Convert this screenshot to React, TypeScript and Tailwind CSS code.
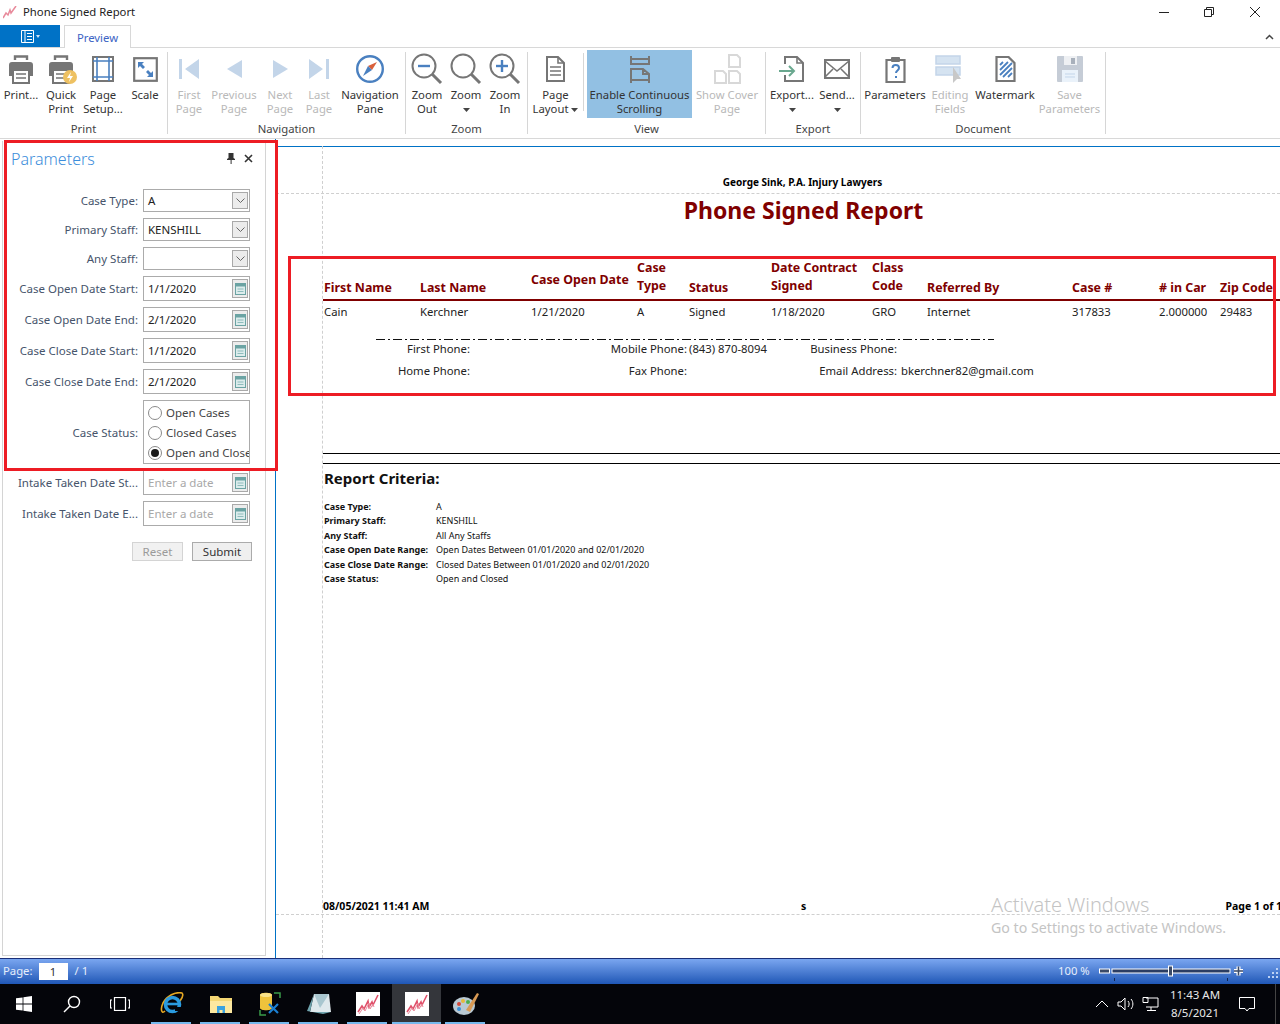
import type { ReactNode } from "react";

const GRAY = "#767676";
const BLUE = "#4a80c0";
const PALE = "#c3d5e9";
const MUTE = "#d8d8d8";

function Arrow() {
  return (
    <svg width="7" height="4" viewBox="0 0 7 4" className="inline-block">
      <path d="M0 0h7L3.5 4z" fill="#444" />
    </svg>
  );
}

function Icon({ w = 32, h = 32, children }: { w?: number; h?: number; children: ReactNode }) {
  return (
    <svg width={w} height={h} viewBox={`0 0 ${w} ${h}`} fill="none">
      {children}
    </svg>
  );
}

function PrinterBody() {
  return (
    <>
      <path d="M10 6V2.5h12V6" stroke={GRAY} strokeWidth="2.4" />
      <path d="M7 8h18a3 3 0 0 1 3 3v11h-4v-6H8v6H4V11a3 3 0 0 1 3-3z" fill={GRAY} />
      <rect x="8" y="16" width="16" height="13" fill="#fff" stroke={GRAY} strokeWidth="2" />
      <path d="M11 20h10M11 24h10" stroke={GRAY} strokeWidth="1.6" />
    </>
  );
}

function Magnifier({ sign }: { sign?: "minus" | "plus" }) {
  return (
    <>
      <circle cx="13" cy="13" r="11.5" stroke={GRAY} strokeWidth="2" />
      <path d="M21 21l9 9" stroke={GRAY} strokeWidth="3" />
      {sign && <path d="M7 13h12" stroke={BLUE} strokeWidth="2.4" />}
      {sign === "plus" && <path d="M13 7v12" stroke={BLUE} strokeWidth="2.4" />}
    </>
  );
}

function ReportLogo({ size = 24 }: { size?: number }) {
  return (
    <svg width={size} height={size} viewBox="0 0 24 24" fill="none">
      <rect width="24" height="24" fill="#fff" />
      <path d="M2 20l4-6 2 3 4-8 1 6 3-5 1 3 5-10" stroke="#e0506a" strokeWidth="1.6" />
      <path d="M3 22l4-6 2 3 4-8 1 6 3-5 1 3" stroke="#e98a9b" strokeWidth="1" />
    </svg>
  );
}

function RibbonBtn({
  width,
  icon,
  lines,
  disabled,
  active,
}: {
  width: string;
  icon: ReactNode;
  lines: ReactNode[];
  disabled?: boolean;
  active?: boolean;
}) {
  return (
    <div className={`${width} h-[68px] shrink-0 flex flex-col items-center ${active ? "bg-[#92c0e3]" : ""} ${disabled ? "text-[#b9b9b9]" : "text-[#333]"}`}>
      <div className="h-[38px] flex items-center justify-center">{icon}</div>
      {lines.map((l, i) => (
        <div key={i} className="h-[14px] leading-[14px] whitespace-nowrap">
          {l}
        </div>
      ))}
    </div>
  );
}

function Group({ label, children, width }: { label: string; children: ReactNode; width: string }) {
  return (
    <div className={`${width} shrink-0 flex flex-col`}>
      <div className="flex h-[68px]">{children}</div>
      <div className="h-[20px] leading-[22px] text-center text-[#444]">{label}</div>
    </div>
  );
}

function Sep() {
  return <div className="w-px h-[82px] mt-[2px] bg-[#d6d6d6] shrink-0" />;
}

function Ribbon() {
  return (
    <div className="h-[91px] shrink-0 flex pt-[2px] border-b border-[#d8d8d8] text-[11.3px]">
      <Group label="Print" width="w-[167px]">
        <div className="w-[2px]" />
        <RibbonBtn width="w-[38px]" lines={["Print..."]} icon={<Icon><g transform="translate(0 1)"><PrinterBody /></g></Icon>} />
        <RibbonBtn
          width="w-[42px]"
          lines={["Quick", "Print"]}
          icon={
            <Icon>
              <g transform="translate(0 1)"><PrinterBody /></g>
              <circle cx="25" cy="24" r="7" fill="#eec162" />
              <path d="M26 19l-4 6h3l-1 4 4-6h-3z" fill="#fff" />
            </Icon>
          }
        />
        <RibbonBtn
          width="w-[42px]"
          lines={["Page", "Setup..."]}
          icon={
            <Icon w={24} h={26}>
              <rect x="2" y="1" width="20" height="24" stroke={GRAY} strokeWidth="2" />
              <path d="M6 1v24M18 1v24M2 5h20M2 21h20" stroke={BLUE} strokeWidth="1.6" />
            </Icon>
          }
        />
        <RibbonBtn
          width="w-[42px]"
          lines={["Scale"]}
          icon={
            <Icon w={25} h={25}>
              <rect x="1.2" y="1.2" width="22.6" height="22.6" stroke={GRAY} strokeWidth="2.2" />
              <path d="M5 5h6l-2 2 3 3-2 2-3-3-2 2zM20 20h-6l2-2-3-3 2-2 3 3 2-2z" fill={BLUE} />
            </Icon>
          }
        />
      </Group>
      <Sep />
      <Group label="Navigation" width="w-[237px]">
        <RibbonBtn width="w-[42px]" disabled lines={["First", "Page"]} icon={<Icon w={20} h={20}><path d="M0 0h3v20H0zM20 0v20L6 10z" fill={PALE} /></Icon>} />
        <RibbonBtn width="w-[48px]" disabled lines={["Previous", "Page"]} icon={<Icon w={15} h={20}><path d="M15 1v18L0 10z" fill={PALE} /></Icon>} />
        <RibbonBtn width="w-[44px]" disabled lines={["Next", "Page"]} icon={<Icon w={15} h={20}><path d="M0 1v18l15-9z" fill={PALE} /></Icon>} />
        <RibbonBtn width="w-[34px]" disabled lines={["Last", "Page"]} icon={<Icon w={20} h={20}><path d="M17 0h3v20h-3zM0 0v20l14-10z" fill={PALE} /></Icon>} />
        <RibbonBtn
          width="w-[68px]"
          lines={["Navigation", "Pane"]}
          icon={
            <Icon w={30} h={30}>
              <circle cx="15" cy="15" r="12.8" stroke={BLUE} strokeWidth="2.4" />
              <path d="M22 8l-9 4 4 4z" fill="#d9603b" />
              <path d="M8 22l5-10 4 4z" fill={BLUE} />
            </Icon>
          }
        />
      </Group>
      <Sep />
      <Group label="Zoom" width="w-[121px]">
        <div className="w-[2px]" />
        <RibbonBtn width="w-[38px]" lines={["Zoom", "Out"]} icon={<Icon><Magnifier sign="minus" /></Icon>} />
        <RibbonBtn width="w-[40px]" lines={["Zoom", <Arrow key="a" />]} icon={<Icon><Magnifier /></Icon>} />
        <RibbonBtn width="w-[38px]" lines={["Zoom", "In"]} icon={<Icon><Magnifier sign="plus" /></Icon>} />
      </Group>
      <Sep />
      <Group label="View" width="w-[237px]">
        <RibbonBtn
          width="w-[55px]"
          lines={["Page", <span key="l">Layout <Arrow /></span>]}
          icon={
            <Icon w={21} h={26}>
              <path d="M2 1h11l6 6v18H2z" stroke={GRAY} strokeWidth="2" />
              <path d="M13 1v6h6M5 11h11M5 15h11M5 19h11" stroke={GRAY} strokeWidth="1.6" />
            </Icon>
          }
        />
        <div className="w-px h-[58px] mt-[3px] bg-[#d6d6d6]" />
        <div className="w-[3px]" />
        <RibbonBtn
          width="w-[105px]"
          active
          lines={["Enable Continuous", "Scrolling"]}
          icon={
            <Icon w={22} h={27}>
              <path d="M2 0v8h18V0M2 3h18" stroke={GRAY} strokeWidth="2" />
              <path d="M2 27V13h12l6 5v9M2 24h18M14 13v5h6" stroke={GRAY} strokeWidth="2" />
            </Icon>
          }
        />
        <RibbonBtn
          width="w-[70px]"
          disabled
          lines={["Show Cover", "Page"]}
          icon={
            <Icon w={27} h={30}>
              <path d="M15 1h8l3 3v9H15zM3 17h6l3 3v9H1V17zM16 17h7l3 3v9H15V17z" stroke={MUTE} strokeWidth="2" />
            </Icon>
          }
        />
      </Group>
      <Sep />
      <Group label="Export" width="w-[94px]">
        <div className="w-[2px]" />
        <RibbonBtn
          width="w-[48px]"
          lines={["Export...", <Arrow key="a" />]}
          icon={
            <Icon w={26} h={26}>
              <path d="M6 8V1h12l6 6v18H6v-6" stroke={GRAY} strokeWidth="2" />
              <path d="M18 1v6h6" stroke={GRAY} strokeWidth="1.6" />
              <path d="M0 15h14M10 10l5 5-5 5" stroke="#6aa88f" strokeWidth="2" />
            </Icon>
          }
        />
        <RibbonBtn
          width="w-[42px]"
          lines={["Send...", <Arrow key="a" />]}
          icon={
            <Icon w={26} h={20}>
              <rect x="1" y="1" width="24" height="18" stroke={GRAY} strokeWidth="2" />
              <path d="M1 2l12 10L25 2M1 18l8-8M25 18l-8-8" stroke={GRAY} strokeWidth="1.6" />
            </Icon>
          }
        />
      </Group>
      <Sep />
      <Group label="Document" width="w-[244px]">
        <div className="w-[5px]" />
        <RibbonBtn
          width="w-[58px]"
          lines={["Parameters"]}
          icon={
            <Icon w={21} h={27}>
              <path d="M6 4H1.5v22h18V4H15" stroke={GRAY} strokeWidth="2.2" />
              <rect x="6" y="1" width="9" height="5" rx="1" fill={GRAY} />
              <path d="M7.5 12c0-4 6.5-4 6.5 0 0 2.5-3 2.5-3 5" stroke={BLUE} strokeWidth="2" />
              <path d="M10 20h2v2h-2z" fill={BLUE} />
            </Icon>
          }
        />
        <RibbonBtn
          width="w-[52px]"
          disabled
          lines={["Editing", "Fields"]}
          icon={
            <Icon w={30} h={30}>
              <path d="M1 2h24v8H1zM1 13h24v8H1z" fill="#d5e3f1" stroke={PALE} strokeWidth="1.5" />
              <path d="M18 13v16l4-4 4 0z" fill="#c8c8c8" />
            </Icon>
          }
        />
        <RibbonBtn
          width="w-[58px]"
          lines={["Watermark"]}
          icon={
            <Icon w={21} h={26}>
              <path d="M1.5 1h12l6 6v18h-18z" stroke={GRAY} strokeWidth="2.2" />
              <path d="M5 9l3-3M5 14l8-8M5 19l12-12M8 21l9-9M13 21l4-4" stroke={BLUE} strokeWidth="1.8" />
            </Icon>
          }
        />
        <RibbonBtn
          width="w-[71px]"
          disabled
          lines={["Save", "Parameters"]}
          icon={
            <Icon w={26} h={26}>
              <rect width="26" height="26" rx="1" fill="#c5ccd6" />
              <rect x="7" y="0" width="13" height="9" fill="#eef0f3" />
              <rect x="14" y="2" width="4" height="6" fill="#a8b0bb" />
              <rect x="5" y="14" width="16" height="12" fill="#eaf2fa" />
              <path d="M8 18h10M8 21h10" stroke={PALE} />
            </Icon>
          }
        />
      </Group>
      <Sep />
    </div>
  );
}

function Caret() {
  return (
    <div className="w-[16px] h-[17px] bg-[#ececec] border border-[#a9a9a9] flex items-center justify-center mr-[1px]">
      <svg width="9" height="6" viewBox="0 0 9 6" fill="none">
        <path d="M.5.5l4 4 4-4" stroke="#666" />
      </svg>
    </div>
  );
}

function Calendar() {
  return (
    <div className="w-[16px] h-[19px] bg-[#ececec] border border-[#a9a9a9] flex items-center justify-center mr-[1px]">
      <svg width="11" height="13" viewBox="0 0 11 13" fill="none">
        <rect x=".5" y="1.5" width="10" height="11" stroke="#6ba3a3" fill="#dcecec" />
        <rect x=".5" y="1.5" width="10" height="3" fill="#6ba3a3" />
        <path d="M2.5 7h6M2.5 9.5h6" stroke="#8fbcbc" />
      </svg>
    </div>
  );
}

function Row({ label, children }: { label: string; children: ReactNode }) {
  return (
    <div className="flex items-center">
      <div className="w-[135px] pt-[1px] text-right text-[#46546b] whitespace-nowrap">{label}</div>
      <div className="ml-[5px]">{children}</div>
    </div>
  );
}

function Combo({ value }: { value: string }) {
  return (
    <div className="w-[107px] h-[23px] border border-[#ababab] bg-white flex items-center justify-between pl-[4px] text-[#222]">
      <span>{value}</span>
      <Caret />
    </div>
  );
}

function DateField({ value }: { value?: string }) {
  return (
    <div className="w-[107px] h-[25px] border border-[#ababab] bg-white flex items-center justify-between pl-[4px]">
      <span className={value ? "text-[#222]" : "text-[#a8a8a8]"}>{value ?? "Enter a date"}</span>
      <Calendar />
    </div>
  );
}

function Radio({ label, checked }: { label: string; checked?: boolean }) {
  return (
    <div className="flex items-center gap-[4px] h-[20px] whitespace-nowrap text-[#444]">
      <div className="w-[14px] h-[14px] shrink-0 rounded-full border border-[#8a8a8a] bg-white flex items-center justify-center">
        {checked && <div className="w-[8px] h-[8px] rounded-full bg-[#1a1a1a]" />}
      </div>
      <span>{label}</span>
    </div>
  );
}

function ParametersPanel() {
  return (
    <aside className="w-[275px] shrink-0 pl-[2px] pb-[2px] pt-[2px]">
      <div className="w-[264px] h-full border-x border-b border-[#d4d4d4] text-[11.5px] flex flex-col">
        <div className="h-[34px] flex items-center pl-[8px] pr-[12px] justify-between">
          <span className="text-[16px] pt-[1px] text-[#3d8edb] font-light">Parameters</span>
          <div className="flex items-center gap-[9px]">
            <svg width="8" height="11" viewBox="0 0 8 11" fill="#333">
              <path d="M1.5 0h5v5l1.500 1v1H4.600v4h-1V7H0V6l1.500-1z" />
            </svg>
            <svg width="9" height="9" viewBox="0 0 9 9" fill="none">
              <path d="M1 1l7 7M8 1L1 8" stroke="#333" strokeWidth="1.6" />
            </svg>
          </div>
        </div>
        <div className="mt-[14px] flex flex-col gap-[6px]">
          <Row label="Case Type:"><Combo value="A" /></Row>
          <Row label="Primary Staff:"><Combo value="KENSHILL" /></Row>
          <Row label="Any Staff:"><Combo value="" /></Row>
          <Row label="Case Open Date Start:"><DateField value="1/1/2020" /></Row>
          <Row label="Case Open Date End:"><DateField value="2/1/2020" /></Row>
          <Row label="Case Close Date Start:"><DateField value="1/1/2020" /></Row>
          <Row label="Case Close Date End:"><DateField value="2/1/2020" /></Row>
          <Row label="Case Status:">
            <div className="w-[107px] h-[64px] border border-[#ababab] pl-[4px] pt-[2px] overflow-hidden">
              <Radio label="Open Cases" />
              <Radio label="Closed Cases" />
              <Radio label="Open and Closed" checked />
            </div>
          </Row>
          <Row label="Intake Taken Date St..."><DateField /></Row>
          <Row label="Intake Taken Date E..."><DateField /></Row>
        </div>
        <div className="mt-[16px] ml-[129px] flex gap-[9px]">
          <div className="w-[51px] h-[19px] leading-[17px] text-center border border-[#d4d4d4] bg-[#f1f1f1] text-[#9a9a9a]">Reset</div>
          <div className="w-[60px] h-[19px] leading-[17px] text-center border border-[#ababab] bg-[#efefef] text-[#333]">Submit</div>
        </div>
      </div>
    </aside>
  );
}

const COLS = "grid grid-cols-[96px_111px_106px_52px_82px_101px_55px_145px_87px_61px_60px]";

function ContactRow({ a, b, bv, c, cv }: { a: string; b: string; bv?: string; c: string; cv?: string }) {
  return (
    <div className="flex h-[22px] items-center whitespace-nowrap text-[#222]">
      <div className="w-[147px] text-right">{a}</div>
      <div className="w-[217px] text-right">{b}</div>
      <div className="w-[2px]" />
      <div className="w-[81px]">{bv}</div>
      <div className="w-[127px] text-right">{c}</div>
      <div className="ml-[4px]">{cv}</div>
    </div>
  );
}

function Criteria({ label, value }: { label: string; value: string }) {
  return (
    <div className="flex h-[14.4px] leading-[14.4px] items-center text-[9px] whitespace-nowrap text-[#111]">
      <div className="w-[112px] font-bold">{label}</div>
      <div>{value}</div>
    </div>
  );
}

function Report() {
  return (
    <main className="relative flex-1 min-w-0 border-l border-[#0072c6] overflow-hidden pt-[7px]">
      <div className="absolute left-[46px] top-[7px] bottom-0 border-l border-dashed border-[#cfcfcf]" />
      <div className="absolute left-0 right-0 top-[54px] border-t border-dashed border-[#cfcfcf]" />
      <div className="absolute left-0 right-0 top-[775px] border-t border-dashed border-[#cfcfcf]" />

      <div className="border-t border-[#0072c6]" />
      <div className="relative w-[957px] ml-[47px] text-[11.3px]">
        <div className="mt-[28px] h-[14px] pl-[2px] leading-[14px] text-center text-[10px] font-bold text-black">George Sink, P.A. Injury Lawyers</div>
        <div className="mt-[5px] h-[32px] pl-[4px] leading-[32px] text-center text-[23px] font-bold text-[#800000]">Phone Signed Report</div>

        <div className={`mt-[33px] h-[40px] ${COLS} items-end pl-[1px] text-[12.4px] font-bold text-[#800000] leading-[18px]`}>
          <div className="pb-[3px]">First Name</div>
          <div className="pb-[3px]">Last Name</div>
          <div className="self-center whitespace-nowrap">Case Open Date</div>
          <div className="pb-[5px]">Case<br />Type</div>
          <div className="pb-[3px]">Status</div>
          <div className="pb-[5px] whitespace-nowrap">Date Contract<br />Signed</div>
          <div className="pb-[5px]">Class<br />Code</div>
          <div className="pb-[3px]">Referred By</div>
          <div className="pb-[3px]">Case #</div>
          <div className="pb-[3px] whitespace-nowrap"># in Car</div>
          <div className="pb-[3px] whitespace-nowrap">Zip Code</div>
        </div>
        <div className="h-[2px] bg-[#800000]" />
        <div className={`h-[22px] ${COLS} items-center pl-[1px] text-[#222]`}>
          <div>Cain</div>
          <div>Kerchner</div>
          <div>1/21/2020</div>
          <div>A</div>
          <div>Signed</div>
          <div>1/18/2020</div>
          <div>GRO</div>
          <div>Internet</div>
          <div>317833</div>
          <div>2.000000</div>
          <div>29483</div>
        </div>
        <div className="mt-[16px] ml-[53px] h-[1px] w-[618px]">
          <svg width="618" height="1" className="block">
            <line x1="0" y1="0.5" x2="618" y2="0.5" stroke="#111" strokeDasharray="9 3 2 3" />
          </svg>
        </div>
        <div className="mt-[-2px]">
          <ContactRow a="First Phone:" b="Mobile Phone:" bv="(843) 870-8094" c="Business Phone:" />
          <ContactRow a="Home Phone:" b="Fax Phone:" c="Email Address:" cv="bkerchner82@gmail.com" />
        </div>

        <div className="mt-[71px] h-px bg-black" />
        <div className="mt-[9px] h-px bg-black" />
        <div className="mt-[4px] ml-[1px] h-[20px] leading-[20px] text-[15px] font-bold text-[#111]">Report Criteria:</div>
        <div className="mt-[12px] ml-[1px]">
          <Criteria label="Case Type:" value="A" />
          <Criteria label="Primary Staff:" value="KENSHILL" />
          <Criteria label="Any Staff:" value="All Any Staffs" />
          <Criteria label="Case Open Date Range:" value="Open Dates Between 01/01/2020 and 02/01/2020" />
          <Criteria label="Case Close Date Range:" value="Closed Dates Between 01/01/2020 and 02/01/2020" />
          <Criteria label="Case Status:" value="Open and Closed" />
        </div>
        <div className="mt-[313px] flex items-center text-[10.5px] font-bold text-black whitespace-nowrap">
          <span className="w-[478px] shrink-0">08/05/2021 11:41 AM</span>
          <span>s</span>
          <span className="ml-auto mr-[-2px]">Page 1 of 1</span>
        </div>
      </div>
      <div className="absolute left-[715px] top-[753px] text-[#c4c4c4] pointer-events-none">
        <div className="text-[20px] leading-[26px] font-light">Activate Windows</div>
        <div className="text-[14.2px] leading-[20px]">Go to Settings to activate Windows.</div>
      </div>
    </main>
  );
}

function StatusBar() {
  return (
    <div className="h-[26px] shrink-0 border-t border-[#1a2f78] bg-gradient-to-b from-[#7aa6f0] to-[#1f57b6] flex items-center text-[11.3px] text-[#e6eefb] pl-[3px] whitespace-nowrap">
      <span>Page:</span>
      <div className="ml-[6px] w-[29px] h-[17px] bg-white text-center leading-[17px] text-[#333]">1</div>
      <span className="ml-[7px]">/ 1</span>
      <span className="ml-auto w-[41px]">100 %</span>
      <svg width="181" height="20" viewBox="0 0 181 20" className="mt-[2px] shrink-0" fill="none">
        <rect x="0.5" y="6" width="10" height="4" fill="#3a4a68" stroke="#fff" />
        <rect x="13" y="6" width="118" height="4" fill="#2b3d63" stroke="#fff" />
        <rect x="69.5" y="3" width="4" height="10" fill="#3a4a68" stroke="#fff" />
        <path d="M15.5 15v3M128.5 15v3" stroke="#14264f" />
        <path d="M135 8h9M139.5 3.5v9" stroke="#fff" strokeWidth="4" />
        <path d="M135 8h9M139.5 3.5v9" stroke="#3a4a68" strokeWidth="1.6" />
        <path d="M177 5h2v2h-2zM173 9h2v2h-2zM177 9h2v2h-2zM169 13h2v2h-2zM173 13h2v2h-2zM177 13h2v2h-2z" fill="#bcd2f5" />
      </svg>
    </div>
  );
}

function SysIcon({ children }: { children: ReactNode }) {
  return <div className="w-[48px] h-[40px] shrink-0 flex items-center justify-center">{children}</div>;
}

function TaskIcon({ children, active }: { children: ReactNode; active?: boolean }) {
  return (
    <div className={`relative w-[49px] h-[40px] shrink-0 flex items-center justify-center ${active ? "bg-[#34363b]" : ""}`}>
      {children}
      <div className={`absolute bottom-0 h-[2px] bg-[#76b9ed] ${active ? "left-0 right-0" : "left-[4px] right-[5px]"}`} />
    </div>
  );
}

function Taskbar() {
  return (
    <div className="h-[40px] shrink-0 bg-[#04050a] flex items-center text-white">
      <SysIcon>
        <svg width="16" height="16" viewBox="0 0 16 16" fill="#fff">
          <path d="M0 2.3L6.6 1.4v6.2H0zM7.4 1.3L16 0v7.6H7.4zM0 8.4h6.6v6.2L0 13.7zM7.4 8.4H16V16l-8.6-1.3z" />
        </svg>
      </SysIcon>
      <SysIcon>
        <svg width="18" height="18" viewBox="0 0 18 18" fill="none" stroke="#fff" strokeWidth="1.4">
          <circle cx="11" cy="7" r="5.5" />
          <path d="M7 11l-6 6" />
        </svg>
      </SysIcon>
      <SysIcon>
        <svg width="20" height="14" viewBox="0 0 20 14" fill="none" stroke="#fff" strokeWidth="1.2">
          <rect x="4.5" y=".5" width="11" height="13" />
          <path d="M2 3H.5v8H2M18 3h1.5v8H18" />
        </svg>
      </SysIcon>
      <div className="w-[3px]" />
      <TaskIcon>
        <svg width="24" height="24" viewBox="0 0 24 24" fill="none">
          <path d="M5 19C1 23 .5 16 3 11 7 4 15-.5 22 1c2 2-.5 6-2 8" stroke="#e5a823" strokeWidth="1.6" />
          <circle cx="12.5" cy="12.5" r="7" stroke="#2a9be0" strokeWidth="3.6" />
          <path d="M6 12h13" stroke="#2a9be0" strokeWidth="2.6" />
          <path d="M15 15h7v4h-7z" fill="#04050a" />
        </svg>
      </TaskIcon>
      <TaskIcon>
        <svg width="22" height="18" viewBox="0 0 22 18">
          <path d="M0 1h8l2 2h12v15H0z" fill="#f4d774" />
          <path d="M0 6h22v12H0z" fill="#fce8a0" />
          <path d="M7 18v-7h8v7h-2.500v-3h-3v3z" fill="#3aa2e0" />
        </svg>
      </TaskIcon>
      <TaskIcon>
        <svg width="22" height="24" viewBox="0 0 22 24" fill="none">
          <path d="M1 3c0-3 12-3 12 0v13c0 3-12 3-12 0z" fill="#eec33c" />
          <ellipse cx="7" cy="3" rx="6" ry="2" fill="#f7e28a" />
          <path d="M15 1h6v5M1 18v5h6" stroke="#3a9a49" strokeWidth="1.5" />
          <path d="M10 21l9-9M10 12l9 9" stroke="#1b7fd1" strokeWidth="2.2" />
        </svg>
      </TaskIcon>
      <TaskIcon>
        <svg width="24" height="22" viewBox="0 0 24 22">
          <path d="M7 1h15l2 18H3z" fill="#dfe8ec" />
          <path d="M7 1l-7 17 16 3 8-2H3z" fill="#6fa3ad" />
          <path d="M7 1h15l-9 14z" fill="#a9c6cf" />
        </svg>
      </TaskIcon>
      <TaskIcon>
        <ReportLogo />
      </TaskIcon>
      <TaskIcon active>
        <ReportLogo />
      </TaskIcon>
      <TaskIcon>
        <svg width="26" height="26" viewBox="0 0 26 26">
          <ellipse cx="11" cy="15" rx="11" ry="9" fill="#b9c9d3" />
          <circle cx="6" cy="13" r="2" fill="#d64a3a" />
          <circle cx="10" cy="10" r="2" fill="#e8b93a" />
          <circle cx="15" cy="11" r="2" fill="#4cae4f" />
          <circle cx="6" cy="18" r="2" fill="#3a8fd6" />
          <path d="M13 19L24 2l2 1-9 18z" fill="#d99a55" />
        </svg>
      </TaskIcon>
      <div className="ml-auto flex items-center">
        <svg width="14" height="8" viewBox="0 0 14 8" fill="none" stroke="#fff" className="mr-[8px]">
          <path d="M1 7l6-6 6 6" />
        </svg>
        <svg width="18" height="14" viewBox="0 0 18 14" fill="none" stroke="#fff" className="mr-[7px]">
          <path d="M1 5h3l4-4v12L4 9H1zM11 4c1.500 2 1.500 4 0 6M14 2c2.500 3 2.500 7 0 10" />
        </svg>
        <svg width="17" height="14" viewBox="0 0 17 14" fill="none" stroke="#fff" className="mr-[7px]">
          <path d="M4 1h12v9H4M1 .5h5v5H1zM9 10v3M5 13.500h9" />
        </svg>
        <div className="w-[58px] text-center leading-[18px] text-[11.5px] text-[#e8e8e8] whitespace-nowrap">
          <div>11:43 AM</div>
          <div>8/5/2021</div>
        </div>
        <svg width="16" height="15" viewBox="0 0 16 15" fill="none" stroke="#fff" className="ml-[15px] mr-[20px]">
          <path d="M.5.5h15v11H10l-2 2.500-2-2.500H.5z" />
        </svg>
        <div className="w-px h-[40px] bg-[#444] mr-[4px]" />
      </div>
    </div>
  );
}

export default function App() {
  return (
    <div className="relative w-[1280px] h-[1024px] overflow-hidden bg-white flex flex-col font-['Noto_Sans',sans-serif] text-[11.3px]">
      <div className="h-[24px] shrink-0 flex items-center pl-[3px]">
        <svg width="14" height="13" viewBox="0 0 14 13" fill="none">
          <path d="M0 12l3-5 2 2 2-5 1 3 5-7" stroke="#e88a9b" strokeWidth="1.5" />
        </svg>
        <span className="ml-[6px] text-[#222]">Phone Signed Report</span>
        <div className="ml-auto flex items-center mr-[19px]">
          <svg width="10" height="1" fill="none"><path d="M0 .5h10" stroke="#222" /></svg>
          <svg width="10" height="10" viewBox="0 0 10 10" fill="none" className="ml-[35px]" stroke="#222">
            <path d="M.5 2.500h7v7h-7zM2.500 2.500v-2h7v7h-2" />
          </svg>
          <svg width="12" height="12" viewBox="0 0 12 12" fill="none" className="ml-[35px]" stroke="#222">
            <path d="M1 1l10 10M11 1L1 11" />
          </svg>
        </div>
      </div>
      <div className="h-[24px] shrink-0 flex items-end border-b border-[#d8d8d8] relative">
        <div className="w-[60px] h-[22px] bg-[#0072c6] flex items-center justify-center gap-[2px]">
          <svg width="13" height="13" viewBox="0 0 13 13" fill="none" stroke="#fff">
            <path d="M.5.5h12v12H.5zM4 .5v12M6 3.500h5M6 6.500h5M6 9.500h5" />
          </svg>
          <svg width="4" height="3" viewBox="0 0 4 3"><path d="M0 0h4L2 3z" fill="#cfe3f5" /></svg>
        </div>
        <div className="ml-[4px] w-[67px] h-[23px] mb-[-1px] border-x border-t border-[#d8d8d8] bg-white text-center leading-[24px] text-[#3c63c4]">Preview</div>
        <svg width="9" height="6" viewBox="0 0 9 6" fill="none" className="ml-auto mr-[6px] mb-[7px]" stroke="#444" strokeWidth="1.5">
          <path d="M1 5l3.500-3.500L8 5" />
        </svg>
      </div>
      <Ribbon />
      <div className="flex-1 min-h-0 flex">
        <ParametersPanel />
        <Report />
      </div>
      <StatusBar />
      <Taskbar />

      <div className="absolute left-[4px] top-[140px] w-[274px] h-[331px] border-[3px] border-[#ed1c24] pointer-events-none" />
      <div className="absolute left-[288px] top-[256px] w-[988px] h-[140px] border-[3px] border-[#ed1c24] pointer-events-none" />
    </div>
  );
}
